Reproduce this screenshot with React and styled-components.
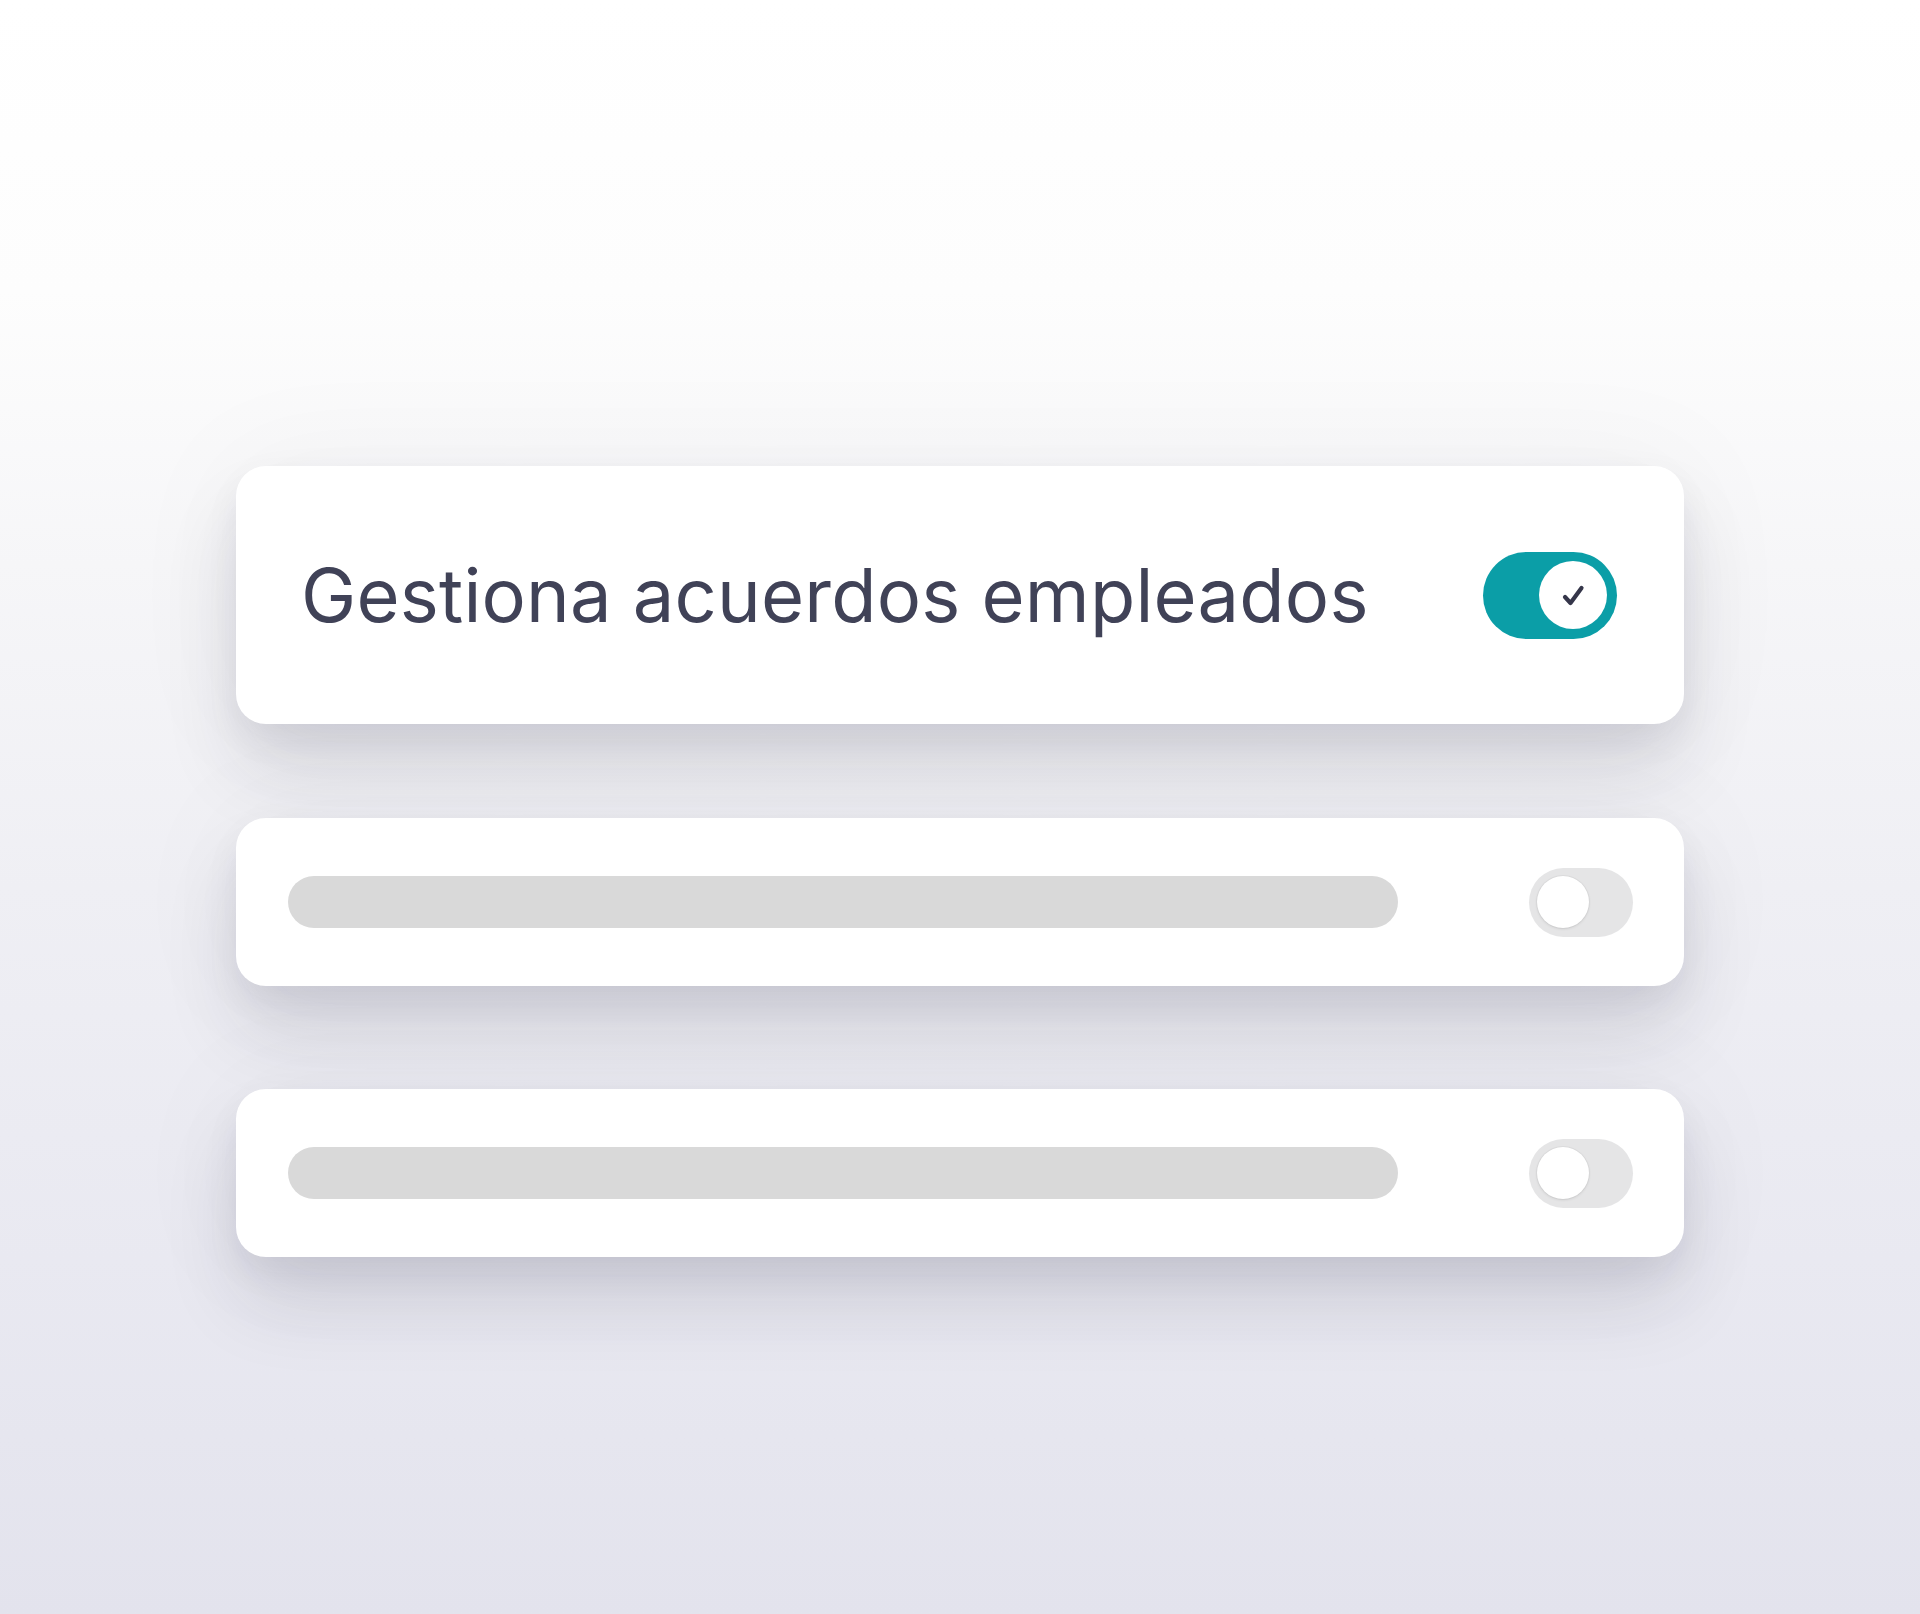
import React from "react";
import styled, { createGlobalStyle, css } from "styled-components";

const GlobalStyle = createGlobalStyle`
  * { box-sizing: border-box; }
  html, body { margin: 0; padding: 0; }
  body {
    font-family: Inter, "Noto Sans", "Liberation Sans", sans-serif;
    background: #ffffff;
  }
`;

const Page = styled.main`
  width: 1920px;
  height: 1614px;
  overflow: hidden;
  display: flex;
  justify-content: center;
  padding-top: 466px;
  background: linear-gradient(
    180deg,
    #ffffff 0%,
    #fdfdfd 18%,
    #f6f6f8 35%,
    #efeff4 55%,
    #e9e9f1 78%,
    #e3e3ed 100%
  );
`;

const Stack = styled.section`
  width: 1448px;
  display: flex;
  flex-direction: column;
`;

const Card = styled.div`
  display: flex;
  align-items: center;
  justify-content: space-between;
  background: #ffffff;
  border-radius: 30px;
  box-shadow:
    0 48px 80px -4px rgba(30, 30, 60, 0.12),
    0 16px 34px rgba(30, 30, 60, 0.06),
    0 0 120px 12px rgba(30, 30, 60, 0.035);
  ${({ $featured }) =>
    $featured
      ? css`
          height: 258px;
          padding: 0 67px 0 65px;
        `
      : css`
          height: 168px;
          margin-top: 94px;
          padding: 0 51px 0 52px;
          &:last-child {
            margin-top: 103px;
          }
        `}
`;

const Title = styled.h2`
  margin: 0;
  font-family: Inter, "Noto Sans", "Liberation Sans", sans-serif;
  font-weight: 400;
  font-size: 74px;
  line-height: 1;
  letter-spacing: 0.2px;
  color: #404257;
`;

const Placeholder = styled.div`
  width: 1110px;
  height: 52px;
  border-radius: 26px;
  background: #d9d9d9;
`;

const Track = styled.div`
  flex: none;
  display: flex;
  align-items: center;
  border-radius: 999px;
  ${({ $on }) =>
    $on
      ? css`
          width: 134px;
          height: 87px;
          padding: 0 10px;
          justify-content: flex-end;
          background: #0b9ea7;
        `
      : css`
          width: 104px;
          height: 69px;
          padding: 0 8px;
          justify-content: flex-start;
          background: #e5e5e6;
        `}
`;

const Knob = styled.span`
  display: flex;
  align-items: center;
  justify-content: center;
  border-radius: 50%;
  background: #ffffff;
  ${({ $on }) =>
    $on
      ? css`
          width: 68px;
          height: 68px;
        `
      : css`
          width: 52px;
          height: 52px;
          box-shadow: 0 1px 3px rgba(0, 0, 0, 0.1), 0 0 0 1px rgba(0, 0, 0, 0.03);
        `}
`;

const Check = () => (
  <svg width="32" height="32" viewBox="0 0 32 32" fill="none">
    <path
      d="M8 18 L13.5 24 L24.5 9"
      stroke="#35364a"
      strokeWidth="4.2"
      strokeLinecap="round"
      strokeLinejoin="round"
    />
  </svg>
);

const Toggle = ({ on }) => (
  <Track $on={on} role="switch" aria-checked={on}>
    <Knob $on={on}>{on && <Check />}</Knob>
  </Track>
);

export default function App() {
  return (
    <>
      <GlobalStyle />
      <Page>
        <Stack>
          <Card $featured>
            <Title>Gestiona acuerdos empleados</Title>
            <Toggle on />
          </Card>
          <Card>
            <Placeholder />
            <Toggle on={false} />
          </Card>
          <Card>
            <Placeholder />
            <Toggle on={false} />
          </Card>
        </Stack>
      </Page>
    </>
  );
}
